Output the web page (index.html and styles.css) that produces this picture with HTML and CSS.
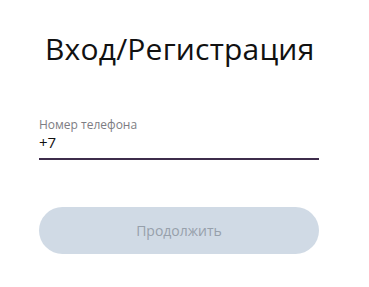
FILE: index.html
```html
<!DOCTYPE html>
<html>
<head>
  <title>Вход/Регистрация</title>
  <link rel="stylesheet" href="styles.css">
</head>
<body>
  <div class="auth">
    <h1 class="auth-title">Вход/Регистрация</h1>
    <div class="phone-field">
      <label for="phone">Номер телефона</label>
      <input type="tel" id="phone" value="+7">
    </div>
    <button class="continue-btn" disabled>Продолжить</button>
  </div>
</body>
</html>
```

FILE: styles.css
```css
/* Page */
body {
  margin: 0;
  background-color: #fff;
  font-family: "Open Sans", Arial, sans-serif;
}

/* Login block */
.auth {
  width: 280px;
  padding: 29px 0 0 39px;
}

/* Title */
.auth-title {
  margin: 0 0 49px 6px;
  font-size: 30px;
  font-weight: 400;
  letter-spacing: 0.2px;
  color: #111;
  white-space: nowrap;
  line-height: 40px;
}

/* Phone input with underline */
.phone-field {
  border-bottom: 2px solid #3e2c4b;
  padding-bottom: 6px;
}

.phone-field label {
  display: block;
  font-size: 12px;
  color: #7d7d83;
  line-height: 14px;
}

.phone-field input {
  display: block;
  width: 100%;
  border: none;
  outline: none;
  padding: 0;
  font-family: inherit;
  font-size: 15px;
  color: #111;
  line-height: 20px;
}

/* Disabled continue button */
.continue-btn {
  display: block;
  width: 100%;
  height: 47px;
  margin-top: 47px;
  border: none;
  border-radius: 24px;
  background-color: #d0dae5;
  color: #97a0ab;
  font-family: inherit;
  font-size: 14px;
}
```
